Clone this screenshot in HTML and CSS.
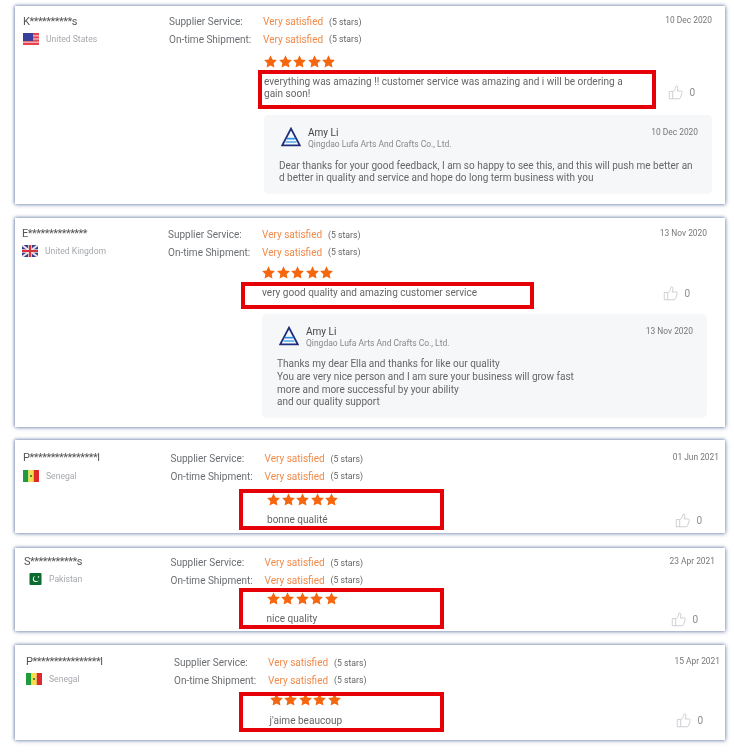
FILE: index.html
```html
<!DOCTYPE html>
<html lang="en">
<head>
    <meta charset="UTF-8">
    <meta name="viewport" content="width=device-width, initial-scale=1.0">
    <title>Customer Reviews</title>
    <link rel="stylesheet" href="styles.css">
</head>
<body>
    <svg class="defs" width="0" height="0">
        <symbol id="star" viewBox="0 0 24 24">
            <polygon points="12,0.5 15.6,8.1 23.8,9.2 17.8,15 19.3,23.3 12,19.3 4.7,23.3 6.2,15 0.2,9.2 8.4,8.1"/>
        </symbol>
        <symbol id="thumb" viewBox="0 0 24 24">
            <path d="M7.5 10.5 H2 V22 H7.5 Z M7.5 11 C10 9.5 12 6.5 12.5 2.5 C12.7 1 15.5 1.2 15.8 3.5 C16 5.5 15.3 7.5 14.8 9.5 H21 C22.6 9.5 23 11 22.5 12.5 L20 20.5 C19.6 21.6 18.8 22 17.8 22 H7.5" fill="none" stroke="#b9bcc0" stroke-width="1.1"/>
        </symbol>
        <symbol id="logo" viewBox="0 0 24 24">
            <polygon points="12,2 22.5,22 1.5,22" fill="none" stroke="#1d2f7c" stroke-width="2.2"/>
            <path d="M7 14 H17" stroke="#2f8fe0" stroke-width="2"/>
            <path d="M5.5 18 H18.5" stroke="#5cb0ee" stroke-width="2"/>
        </symbol>
        <symbol id="flag-sn" viewBox="0 0 16 12">
            <rect width="5.4" height="12" fill="#1f9a3c"/>
            <rect x="5.4" width="5.3" height="12" fill="#f4e04a"/>
            <rect x="10.7" width="5.3" height="12" fill="#de2a2a"/>
            <circle cx="8" cy="6" r="1.1" fill="#1f7a3c"/>
        </symbol>
    </svg>

    <main class="reviews">
        <article class="review review-one">
            <div class="buyer">
                <div class="buyer-name">K**********s</div>
                <div class="buyer-country">
                    <svg class="flag" viewBox="0 0 16 12">
                        <rect width="16" height="12" fill="#e6434e"/>
                        <rect y="2.2" width="16" height="1.2" fill="#f3c4c8"/>
                        <rect y="5.4" width="16" height="1.2" fill="#f3c4c8"/>
                        <rect y="8.6" width="16" height="1.2" fill="#f3c4c8"/>
                        <rect width="10" height="8" fill="#3a3f9c"/>
                    </svg>
                    <span>United States</span>
                </div>
            </div>
            <div class="detail">
                <div class="rating-row">
                    <span class="rating-label">Supplier Service:</span>
                    <span class="rating-value">Very satisfied</span>
                    <span class="rating-count">(5 stars)</span>
                    <span class="date">10 Dec 2020</span>
                </div>
                <div class="rating-row">
                    <span class="rating-label">On-time Shipment:</span>
                    <span class="rating-value">Very satisfied</span>
                    <span class="rating-count">(5 stars)</span>
                </div>
                <div class="feedback">
                    <div class="stars">
                        <svg><use href="#star"/></svg><svg><use href="#star"/></svg><svg><use href="#star"/></svg><svg><use href="#star"/></svg><svg><use href="#star"/></svg>
                    </div>
                    <div class="comment-row">
                        <p class="comment">everything was amazing !! customer service was amazing and i will be ordering a<br>gain soon!</p>
                        <div class="like"><svg><use href="#thumb"/></svg><span>0</span></div>
                    </div>
                    <div class="reply">
                        <div class="reply-head">
                            <svg class="reply-logo"><use href="#logo"/></svg>
                            <div class="reply-who">
                                <div class="reply-name">Amy Li</div>
                                <div class="reply-company">Qingdao Lufa Arts And Crafts Co., Ltd.</div>
                            </div>
                            <span class="date">10 Dec 2020</span>
                        </div>
                        <p class="reply-text">Dear thanks for your good feedback, I am so happy to see this, and this will push me better an<br>d better in quality and service and hope do long term business with you</p>
                    </div>
                </div>
            </div>
            <div class="highlight"></div>
        </article>

        <article class="review review-two">
            <div class="buyer">
                <div class="buyer-name">E**************</div>
                <div class="buyer-country">
                    <svg class="flag" viewBox="0 0 16 12">
                        <rect width="16" height="12" fill="#2f3f8f"/>
                        <path d="M0 0 L16 12 M16 0 L0 12" stroke="#f2dede" stroke-width="2"/>
                        <path d="M8 0 V12 M0 6 H16" stroke="#f2dede" stroke-width="3.6"/>
                        <path d="M8 0 V12 M0 6 H16" stroke="#d8323c" stroke-width="2"/>
                    </svg>
                    <span>United Kingdom</span>
                </div>
            </div>
            <div class="detail">
                <div class="rating-row">
                    <span class="rating-label">Supplier Service:</span>
                    <span class="rating-value">Very satisfied</span>
                    <span class="rating-count">(5 stars)</span>
                    <span class="date">13 Nov 2020</span>
                </div>
                <div class="rating-row">
                    <span class="rating-label">On-time Shipment:</span>
                    <span class="rating-value">Very satisfied</span>
                    <span class="rating-count">(5 stars)</span>
                </div>
                <div class="feedback">
                    <div class="stars">
                        <svg><use href="#star"/></svg><svg><use href="#star"/></svg><svg><use href="#star"/></svg><svg><use href="#star"/></svg><svg><use href="#star"/></svg>
                    </div>
                    <div class="comment-row">
                        <p class="comment">very good quality and amazing customer service</p>
                        <div class="like"><svg><use href="#thumb"/></svg><span>0</span></div>
                    </div>
                    <div class="reply">
                        <div class="reply-head">
                            <svg class="reply-logo"><use href="#logo"/></svg>
                            <div class="reply-who">
                                <div class="reply-name">Amy Li</div>
                                <div class="reply-company">Qingdao Lufa Arts And Crafts Co., Ltd.</div>
                            </div>
                            <span class="date">13 Nov 2020</span>
                        </div>
                        <p class="reply-text">Thanks my dear Ella and thanks for like our quality<br>You are very nice person and I am sure your business will grow fast<br>more and more successful by your ability<br>and our quality support</p>
                    </div>
                </div>
            </div>
            <div class="highlight"></div>
        </article>

        <article class="review review-three">
            <div class="buyer">
                <div class="buyer-name">P****************l</div>
                <div class="buyer-country">
                    <svg class="flag"><use href="#flag-sn"/></svg>
                    <span>Senegal</span>
                </div>
            </div>
            <div class="detail">
                <div class="rating-row">
                    <span class="rating-label">Supplier Service:</span>
                    <span class="rating-value">Very satisfied</span>
                    <span class="rating-count">(5 stars)</span>
                    <span class="date">01 Jun 2021</span>
                </div>
                <div class="rating-row">
                    <span class="rating-label">On-time Shipment:</span>
                    <span class="rating-value">Very satisfied</span>
                    <span class="rating-count">(5 stars)</span>
                </div>
                <div class="feedback">
                    <div class="stars">
                        <svg><use href="#star"/></svg><svg><use href="#star"/></svg><svg><use href="#star"/></svg><svg><use href="#star"/></svg><svg><use href="#star"/></svg>
                    </div>
                    <div class="comment-row">
                        <p class="comment">bonne qualité</p>
                        <div class="like"><svg><use href="#thumb"/></svg><span>0</span></div>
                    </div>
                </div>
            </div>
            <div class="highlight"></div>
        </article>

        <article class="review review-four">
            <div class="buyer">
                <div class="buyer-name">S***********s</div>
                <div class="buyer-country">
                    <svg class="flag flag-square" viewBox="0 0 12 12">
                        <rect width="12" height="12" rx="1" fill="#0b6b2e"/>
                        <circle cx="6.3" cy="6" r="3" fill="#fff"/>
                        <circle cx="7.1" cy="5.4" r="2.7" fill="#0b6b2e"/>
                        <circle cx="9" cy="4" r="0.8" fill="#fff"/>
                    </svg>
                    <span>Pakistan</span>
                </div>
            </div>
            <div class="detail">
                <div class="rating-row">
                    <span class="rating-label">Supplier Service:</span>
                    <span class="rating-value">Very satisfied</span>
                    <span class="rating-count">(5 stars)</span>
                    <span class="date">23 Apr 2021</span>
                </div>
                <div class="rating-row">
                    <span class="rating-label">On-time Shipment:</span>
                    <span class="rating-value">Very satisfied</span>
                    <span class="rating-count">(5 stars)</span>
                </div>
                <div class="feedback">
                    <div class="stars">
                        <svg><use href="#star"/></svg><svg><use href="#star"/></svg><svg><use href="#star"/></svg><svg><use href="#star"/></svg><svg><use href="#star"/></svg>
                    </div>
                    <div class="comment-row">
                        <p class="comment">nice quality</p>
                        <div class="like"><svg><use href="#thumb"/></svg><span>0</span></div>
                    </div>
                </div>
            </div>
            <div class="highlight"></div>
        </article>

        <article class="review review-five">
            <div class="buyer">
                <div class="buyer-name">P****************l</div>
                <div class="buyer-country">
                    <svg class="flag"><use href="#flag-sn"/></svg>
                    <span>Senegal</span>
                </div>
            </div>
            <div class="detail">
                <div class="rating-row">
                    <span class="rating-label">Supplier Service:</span>
                    <span class="rating-value">Very satisfied</span>
                    <span class="rating-count">(5 stars)</span>
                    <span class="date">15 Apr 2021</span>
                </div>
                <div class="rating-row">
                    <span class="rating-label">On-time Shipment:</span>
                    <span class="rating-value">Very satisfied</span>
                    <span class="rating-count">(5 stars)</span>
                </div>
                <div class="feedback">
                    <div class="stars">
                        <svg><use href="#star"/></svg><svg><use href="#star"/></svg><svg><use href="#star"/></svg><svg><use href="#star"/></svg><svg><use href="#star"/></svg>
                    </div>
                    <div class="comment-row">
                        <p class="comment">j'aime beaucoup</p>
                        <div class="like"><svg><use href="#thumb"/></svg><span>0</span></div>
                    </div>
                </div>
            </div>
            <div class="highlight"></div>
        </article>
    </main>
</body>
</html>
```

FILE: styles.css
```css
* {
    margin: 0;
    padding: 0;
    box-sizing: border-box;
}
html, body {
    height: 752px;
    overflow: hidden;
}
body {
    background: #fff;
    font-family: 'Roboto', 'Liberation Sans', sans-serif;
    color: #666;
}
.defs {
    position: absolute;
}
.reviews {
    display: flex;
    flex-direction: column;
    padding: 6px 9px 0 15px;
    filter: blur(0.4px);
}
.review {
    position: relative;
    display: flex;
    background: #fff;
    box-shadow: -1px 0 3px rgba(110, 130, 170, 0.6), 1px 1px 4px rgba(110, 130, 170, 0.6), 0 -1px 3px rgba(110, 130, 170, 0.45);
}
.review-one { height: 198px; padding: 8px 13px 0 8px; margin-bottom: 14px; }
.review-two { height: 209px; padding: 9px 18px 0 7px; margin-bottom: 13px; }
.review-three { height: 93px; padding: 11px 6px 0 8px; margin-bottom: 15px; }
.review-four { height: 83px; padding: 7px 10px 0 9px; margin-bottom: 14px; }
.review-five { height: 95px; padding: 10px 5px 0 11px; }
.buyer {
    width: 146px;
    flex-shrink: 0;
}
.review-one .buyer { margin-top: 1px; }
.review-three .buyer { width: 147.5px; }
.review-four .buyer { width: 146.5px; }
.review-five .buyer { width: 148px; }
.buyer-name {
    font-size: 11px;
    line-height: 14px;
    letter-spacing: -0.5px;
    color: #555;
}
.buyer-country {
    display: flex;
    align-items: center;
    margin-top: 4px;
    font-size: 8.6px;
    color: #a5a8ac;
}
.review-three .buyer-country { margin-top: 5px; }
.flag {
    width: 16px;
    height: 12px;
    margin-right: 7px;
}
.flag-square {
    width: 13px;
    margin-left: 5px;
}
.detail {
    flex: 1;
    margin-top: -1px;
}
.rating-row {
    display: flex;
    align-items: center;
    height: 17.5px;
    font-size: 10px;
    white-space: nowrap;
}
.rating-label {
    width: 94px;
    color: #6b6e72;
}
.rating-value {
    width: 66px;
    color: #f08a4b;
}
.rating-count {
    font-size: 8.7px;
    color: #666;
}
.date {
    margin-left: auto;
    font-size: 8.4px;
    color: #777;
}
.rating-row .date {
    margin-bottom: 3px;
}
.reply-head .date {
    margin-top: 1px;
}
.feedback {
    margin-left: 94px;
}
.review-one .feedback { margin-left: 95px; }
.review-three .feedback { margin-left: 96.5px; }
.review-four .feedback { margin-left: 96px; }
.review-five .feedback { margin-left: 95.5px; }
.stars {
    display: flex;
    gap: 1.6px;
    height: 13px;
    margin-top: 5px;
}
.review-one .stars { margin-top: 7px; }
.review-three .stars { margin-top: 8px; }
.review-four .stars { margin-top: 3px; }
.review-five .stars { margin-top: 4px; }
.stars svg {
    width: 13px;
    height: 13px;
    fill: #f5660f;
}
.comment-row {
    display: flex;
    justify-content: space-between;
    margin-top: 8px;
}
.review-five .comment-row { margin-top: 8.5px; }
.comment {
    font-size: 10.05px;
    line-height: 12px;
    color: #666;
    white-space: nowrap;
}
.like {
    display: flex;
    align-items: center;
    gap: 6px;
    height: 12.5px;
    margin: 0 17px 1px 0;
    align-self: flex-end;
    font-size: 10px;
    color: #8a8d90;
}
.like svg {
    width: 15px;
    height: 15px;
}
.reply {
    background: #f6f7f9;
    border-radius: 5px;
    padding: 11px 14px 0 15px;
}
.review-one .reply { height: 79px; margin-top: 15px; }
.review-two .reply { height: 104px; margin-top: 13px; }
.reply-head {
    display: flex;
    align-items: flex-start;
}
.reply-logo {
    width: 20px;
    height: 20px;
    margin: 1px 7px 0 2px;
}
.reply-name {
    font-size: 10px;
    line-height: 13px;
    color: #444;
}
.reply-company {
    font-size: 8.5px;
    line-height: 11px;
    color: #888;
}
.reply-text {
    margin-top: 9.5px;
    font-size: 10px;
    line-height: 12.8px;
    color: #666;
    white-space: nowrap;
}
.highlight {
    position: absolute;
    border: 4px solid #e60008;
}
.review-one .highlight { left: 243px; top: 64px; width: 398px; height: 39px; }
.review-two .highlight { left: 226px; top: 64px; width: 293px; height: 27px; }
.review-three .highlight { left: 224px; top: 49px; width: 205px; height: 41px; }
.review-four .highlight { left: 224px; top: 40px; width: 205px; height: 41px; }
.review-five .highlight { left: 224px; top: 47px; width: 205px; height: 40px; }
```
